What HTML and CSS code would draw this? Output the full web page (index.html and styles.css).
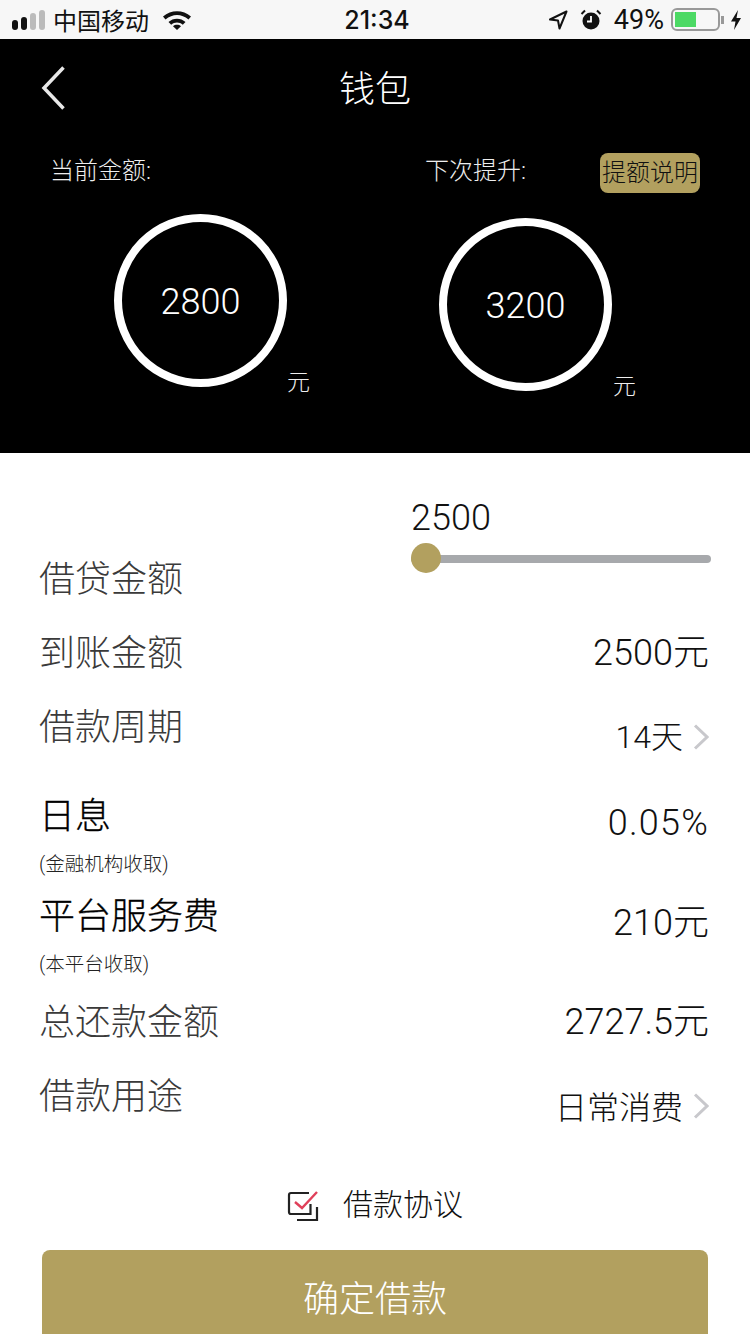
FILE: index.html
```html
<!DOCTYPE html>
<html lang="zh-CN">
<head>
    <meta charset="UTF-8">
    <meta name="viewport" content="width=device-width, initial-scale=1.0">
    <title>钱包</title>
    <link rel="stylesheet" href="styles.css">
</head>
<body>
    <div class="status-bar">
        <div class="status-left">
            <div class="signal">
                <span class="dot on"></span><span class="dot on"></span><span class="dot"></span><span class="dot"></span>
            </div>
            <span class="carrier">中国移动</span>
            <svg class="wifi" width="28" height="21" viewBox="0 0 28 21">
                <path d="M0 7.500C8 .5 20 .5 28 7.500L25.500 10.500C18.500 4.500 9.500 4.500 2.500 10.500Z" fill="#111"/>
                <path d="M5.500 13C10 8.500 18 8.500 22.500 13L19.800 15.800C16.500 12.800 11.500 12.800 8.200 15.800Z" fill="#111"/>
                <path d="M10 17.200C12.300 15.300 15.700 15.300 18 17.200L14 21Z" fill="#111"/>
            </svg>
        </div>
        <div class="status-time">21:34</div>
        <div class="status-right">
            <svg width="20" height="20" viewBox="0 0 20 20">
                <path d="M18.500 1.500L2 9.500L10 10.500L11.500 18.500Z" fill="none" stroke="#111" stroke-width="2" stroke-linejoin="round"/>
            </svg>
            <svg class="alarm" width="22" height="22" viewBox="0 0 22 22">
                <circle cx="11" cy="12" r="8.500" fill="#111"/>
                <path d="M11 7V12.500H7" fill="none" stroke="#fff" stroke-width="1.800"/>
                <path d="M1.500 5L5 1.500M20.500 5L17 1.500" stroke="#111" stroke-width="2"/>
            </svg>
            <span class="battery-text">49%</span>
            <div class="battery"><div class="battery-fill"></div></div>
            <span class="battery-cap"></span>
            <svg width="12" height="22" viewBox="0 0 12 22">
                <path d="M8 1L1 12.500H5.500L4 21L11 9H6.500Z" fill="#111"/>
            </svg>
        </div>
    </div>

    <div class="wallet">
        <div class="nav">
            <svg class="back" width="24" height="44" viewBox="0 0 24 44">
                <path d="M22.500 1.500L3 22L22.500 42.500" fill="none" stroke="#e8e8e8" stroke-width="3.500"/>
            </svg>
            <h1 class="nav-title">钱包</h1>
        </div>
        <div class="amounts">
            <div class="amount amount-current">
                <div class="amount-label">当前金额:</div>
                <div class="ring">2800</div>
                <div class="unit">元</div>
            </div>
            <div class="amount amount-next">
                <div class="amount-label">下次提升:</div>
                <div class="ring">3200</div>
                <div class="unit">元</div>
                <div class="note-badge">提额说明</div>
            </div>
        </div>
    </div>

    <div class="form">
        <div class="row row-slider">
            <div class="label">借贷金额</div>
            <div class="slider">
                <div class="slider-value">2500</div>
                <div class="slider-track"><span class="slider-thumb"></span></div>
            </div>
        </div>
        <div class="row row-h74">
            <div class="label">到账金额</div>
            <div class="value">2500元</div>
        </div>
        <div class="row row-h74">
            <div class="label">借款周期</div>
            <div class="value value-link">14天
                <svg class="chevron" width="16" height="26" viewBox="0 0 16 26"><path d="M2 1.500L14 13L2 24.500" fill="none" stroke="#c8c8cc" stroke-width="3"/></svg>
            </div>
        </div>
        <div class="row row-fee">
            <div>
                <div class="label label-dark">日息</div>
                <div class="sublabel">(金融机构收取)</div>
            </div>
            <div class="value value-rate">0.05%</div>
        </div>
        <div class="row row-fee">
            <div>
                <div class="label label-dark">平台服务费</div>
                <div class="sublabel">(本平台收取)</div>
            </div>
            <div class="value">210元</div>
        </div>
        <div class="row row-h74">
            <div class="label">总还款金额</div>
            <div class="value">2727.5元</div>
        </div>
        <div class="row row-h74">
            <div class="label">借款用途</div>
            <div class="value value-link value-purpose">日常消费
                <svg class="chevron" width="16" height="26" viewBox="0 0 16 26"><path d="M2 1.500L14 13L2 24.500" fill="none" stroke="#c8c8cc" stroke-width="3"/></svg>
            </div>
        </div>
    </div>

    <div class="agreement">
        <svg width="32" height="32" viewBox="0 0 32 32">
            <path d="M22 3H4Q2 3 2 5V22Q2 24 4 24H23.500V14" fill="none" stroke="#222" stroke-width="2.200"/>
            <path d="M30 17V30H10" fill="none" stroke="#222" stroke-width="2.200"/>
            <path d="M8 12L15 18L30 2" fill="none" stroke="#e0405a" stroke-width="2.400"/>
        </svg>
        <span>借款协议</span>
    </div>

    <button class="confirm">确定借款</button>
</body>
</html>
```

FILE: styles.css
```css
* {
    box-sizing: border-box;
}

html, body {
    margin: 0;
    height: 1334px;
    overflow: hidden;
}

body {
    background: #fff;
    color: #222;
    font-family: "Roboto", "Noto Sans CJK SC", sans-serif;
    font-weight: 300;
}

.status-bar {
    display: flex;
    justify-content: space-between;
    align-items: center;
    height: 39px;
    padding: 0 8px 0 12px;
    background: #f7f7f7;
    color: #111;
    font-size: 25px;
    font-weight: 400;
}

.status-left, .status-right {
    display: flex;
    align-items: center;
    width: 290px;
}

.status-right {
    justify-content: flex-end;
}

.signal {
    display: flex;
    align-items: flex-end;
    gap: 3px;
}

.dot {
    width: 6px;
    height: 20px;
    border-radius: 3px;
    background: #bbb;
}

.dot.on {
    background: #111;
}

.dot:nth-child(1) {
    height: 10px;
}

.dot:nth-child(2) {
    height: 13px;
}

.dot:nth-child(3) {
    height: 17px;
}

.carrier {
    margin-left: 8px;
    font-size: 24px;
}

.wifi {
    margin-left: 14px;
}

.status-time {
    font-family: "Inter", sans-serif;
    font-weight: 500;
    font-size: 25px;
}

.alarm {
    margin-left: 12px;
}

.battery-text {
    margin-left: 12px;
    font-size: 27px;
}

.battery {
    width: 49px;
    height: 23px;
    margin-left: 7px;
    padding: 2px;
    border: 2px solid #999;
    border-radius: 6px;
}

.battery-fill {
    width: 21px;
    height: 100%;
    background: #4cd964;
}

.battery-cap {
    width: 3px;
    height: 8px;
    margin-left: 1px;
    margin-right: 6px;
    background: #999;
}

.wallet {
    height: 414px;
    background: #000;
    color: #fff;
}

.nav {
    display: flex;
    justify-content: center;
    align-items: center;
    height: 98px;
    padding-bottom: 4px;
    position: relative;
}

.back {
    position: absolute;
    left: 41px;
    top: 27px;
}

.nav-title {
    margin: 0;
    font-size: 36px;
    font-weight: 300;
}

.amounts {
    display: flex;
}

.amount {
    position: relative;
    width: 375px;
    padding: 18px 0 0 50px;
}

.amount-label {
    font-size: 24px;
    line-height: 32px;
    color: #eee;
}

.ring {
    display: flex;
    justify-content: center;
    align-items: center;
    width: 173px;
    height: 173px;
    margin: 27px 0 0 64px;
    padding-top: 2px;
    border: 8px solid #fff;
    border-radius: 50%;
    font-size: 36px;
}

.amount-next .ring {
    margin: 31px 0 0 14px;
}

.unit {
    position: absolute;
    left: 287px;
    top: 226px;
    font-size: 23px;
    color: #eee;
}

.amount-next .unit {
    left: 238px;
    top: 230px;
}

.note-badge {
    position: absolute;
    left: 225px;
    top: 16px;
    width: 100px;
    height: 40px;
    border-radius: 8px;
    background: #b2a05f;
    color: #111;
    font-size: 24px;
    font-weight: 300;
    line-height: 40px;
    text-align: center;
    white-space: nowrap;
}

.form {
    padding: 0 41px 0 39px;
}

.row {
    display: flex;
    justify-content: space-between;
    align-items: center;
}

.row-slider {
    height: 163px;
    align-items: flex-end;
    padding-bottom: 11px;
}

.row-h74 {
    height: 74px;
}

.row-h74 .label {
    padding-top: 2px;
}

.row-fee {
    height: 95px;
    align-items: flex-start;
}

.row-fee:nth-child(4) {
    margin-top: 26px;
}

.row-fee + .row-fee {
    margin-top: 5px;
}

.row-fee .label {
    padding-top: 2px;
    box-sizing: content-box;
}

.row-fee .value {
    margin-top: 8px;
}

.value-rate {
    letter-spacing: 1.200px;
}

.label {
    font-size: 36px;
    line-height: 50px;
    color: #3a3a3a;
}

.label-dark {
    color: #000;
    -webkit-text-stroke: 0.3px #000;
}

.sublabel {
    margin-top: 10px;
    font-size: 19.500px;
    line-height: 26px;
    color: #222;
}

.value {
    display: flex;
    align-items: center;
    gap: 10px;
    font-size: 36px;
    line-height: 50px;
    color: #111;
}

.value-link {
    padding-top: 20px;
    font-size: 32px;
}

.value-purpose {
    padding-top: 24px;
}

.value-purpose .chevron {
    margin-top: -4px;
}

.slider {
    width: 300px;
    margin: 0 -2px 42px 0;
}

.slider-value {
    font-size: 36px;
    line-height: 44px;
    color: #111;
}

.slider-track {
    position: relative;
    height: 8px;
    margin-top: 15px;
    border-radius: 4px;
    background: #a7a9ac;
}

.slider-thumb {
    position: absolute;
    left: 0;
    top: -12px;
    width: 30px;
    height: 30px;
    border-radius: 50%;
    background: #b2a05f;
}

.agreement {
    display: flex;
    justify-content: center;
    align-items: center;
    gap: 24px;
    height: 72px;
    margin-top: 33px;
    font-size: 30px;
    color: #111;
}

.agreement svg {
    margin-top: 8px;
}

.confirm {
    display: block;
    width: 666px;
    height: 98px;
    margin: 12px 0 0 42px;
    padding: 0 0 6px;
    border: 0;
    border-radius: 8px;
    background: #b2a05f;
    color: #fff;
    font-family: inherit;
    font-size: 36px;
    font-weight: 300;
}
```
